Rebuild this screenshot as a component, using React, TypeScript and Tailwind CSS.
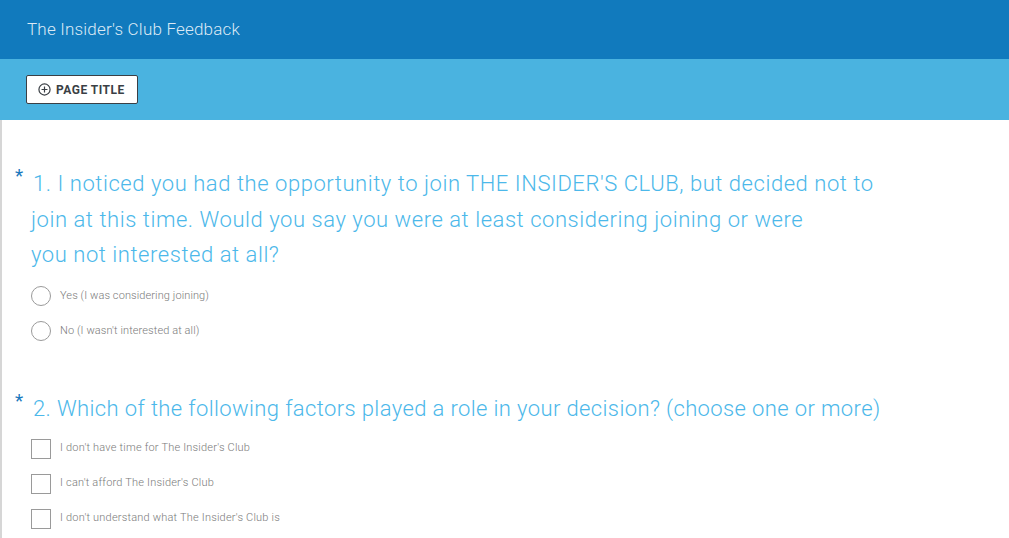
import React from "react";

const font = { fontFamily: "Roboto, 'Helvetica Neue', Arial, sans-serif" };

function Radio({ label }: { label: string }) {
  return (
    <div className="flex items-center h-[35px]">
      <span className="w-[20px] h-[20px] rounded-full border border-[#9a9a9a] bg-white shrink-0" />
      <span className="ml-[9px] text-[11px] font-light text-[#7a7a7a] tracking-[0.1px]">{label}</span>
    </div>
  );
}

function Check({ label }: { label: string }) {
  return (
    <div className="flex items-center h-[35px]">
      <span className="w-[20px] h-[20px] border border-[#9a9a9a] bg-white shrink-0" />
      <span className="ml-[9px] text-[11px] font-light text-[#7a7a7a] tracking-[0.2px]">{label}</span>
    </div>
  );
}

export default function App() {
  return (
    <div className="w-[1009px] h-[538px] overflow-hidden bg-white" style={font}>
      <div className="h-[59px] bg-[#117abd] flex items-center pl-[27px]">
        <span className="text-[17px] font-light text-[#dbe9f5] tracking-[0.2px]">The Insider's Club Feedback</span>
      </div>
      <div className="h-[61px] bg-[#4ab3e0] pl-[26px] pt-[16px]">
        <button className="h-[29px] w-[112px] bg-white border border-[#3a3f45] rounded-[2px] flex items-center pl-[11px] gap-[5px]">
          <svg width="13" height="13" viewBox="0 0 14 14" fill="none" stroke="#3a3f45" strokeWidth="1.3">
            <circle cx="7" cy="7" r="6" />
            <path d="M7 3.8v6.4M3.8 7h6.4" />
          </svg>
          <span className="text-[12px] font-bold text-[#3a3f45] tracking-[0.5px]">PAGE TITLE</span>
        </button>
      </div>
      <div className="border-l-2 border-[#d6d6d6] h-[418px] pl-[29px] pt-[46px]">
        <div className="relative">
          <span className="absolute left-[-16px] top-[-4px] text-[19px] text-[#1a78bd]">*</span>
          <div className="text-[22px] font-light text-[#4cb8ea] leading-[35.5px] tracking-[0.55px]">
            <div className="whitespace-nowrap pl-[2px]">1. I noticed you had the opportunity to join THE INSIDER'S CLUB, but decided not to</div>
            <div className="whitespace-nowrap">join at this time. Would you say you were at least considering joining or were</div>
            <div className="whitespace-nowrap">you not interested at all?</div>
          </div>
        </div>
        <div className="mt-[6px]">
          <Radio label="Yes (I was considering joining)" />
          <Radio label="No (I wasn't interested at all)" />
        </div>
        <div className="relative mt-[42px]">
          <span className="absolute left-[-16px] top-[-4px] text-[19px] text-[#1a78bd]">*</span>
          <div className="text-[22px] font-light text-[#4cb8ea] leading-[35.5px] tracking-[0.38px] whitespace-nowrap pl-[2px]">
            2. Which of the following factors played a role in your decision? (choose one or more)
          </div>
        </div>
        <div className="mt-[5px]">
          <Check label="I don't have time for The Insider's Club" />
          <Check label="I can't afford The Insider's Club" />
          <Check label="I don't understand what The Insider's Club is" />
        </div>
      </div>
    </div>
  );
}
